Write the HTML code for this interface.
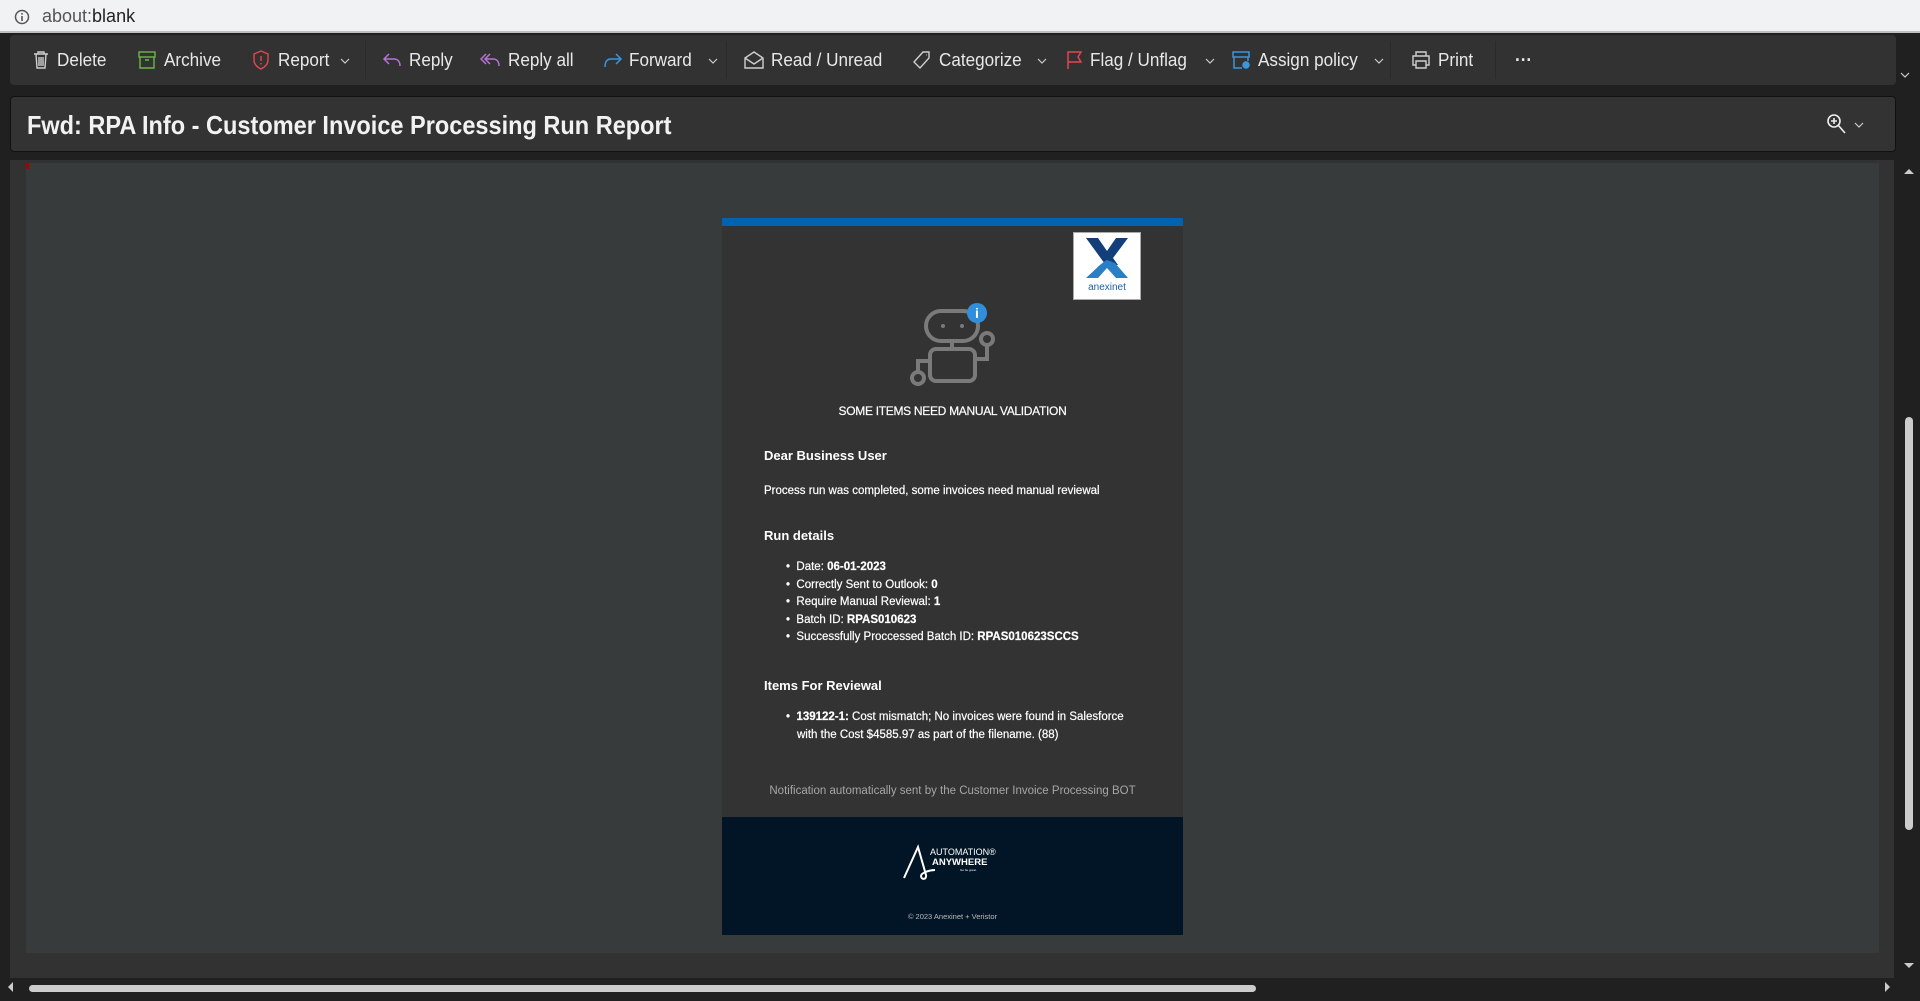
<!DOCTYPE html>
<html><head><meta charset="utf-8"><style>
*{margin:0;padding:0;box-sizing:border-box}
body{width:1920px;height:1001px;overflow:hidden;background:#202020;font-family:"Liberation Sans",sans-serif;position:relative}
.abs{position:absolute}
.addr{left:0;top:0;width:1920px;height:33px;background:#f1f2f4;border-bottom:2px solid #bfbfbf}
.tb{left:10px;top:35px;width:1886px;height:50px;background:#323232;border-radius:4px}
.ti{position:absolute;top:0;height:50px;line-height:50px;color:#e8e8e8;font-size:18px;white-space:nowrap;transform:scaleX(0.95);transform-origin:left}
.ic{position:absolute;top:15px}
.chev{position:absolute;top:22px}
.div{position:absolute;top:6px;width:1px;height:38px;background:#2a2a2a}
.subj{left:10px;top:96px;width:1886px;height:56px;background:#333;border:1px solid #111;border-radius:4px}
.panel{left:10px;top:160px;width:1884px;height:818px;background:#323232}
.content{left:26px;top:163px;width:1853px;height:790px;background:#383b3c}
.card{left:722px;top:218px;width:461px;height:717px;background:#333}
.t{position:absolute;color:#fff;white-space:nowrap}
</style></head><body>
<div class="abs addr">
 <svg class="abs" style="left:14px;top:9px" width="16" height="16"><circle cx="8" cy="8" r="6.5" fill="none" stroke="#555" stroke-width="1.5"/><rect x="7.2" y="7" width="1.6" height="5" fill="#555"/><rect x="7.2" y="4" width="1.6" height="1.6" fill="#555"/></svg>
 <div class="abs" style="left:42px;top:6px;font-size:18px;color:#555">about:<span style="color:#222">blank</span></div>
</div>
<div class="abs tb">
 <svg class="ic" style="left:21px" width="20" height="20" fill="none" stroke="#cfcfcf" stroke-width="1.4"><path d="M3 4h14M7 4V2h6v2M5 4l1 14h8l1-14M8 7v9M10 7v9M12 7v9"/></svg>
 <div class="ti" style="left:47px">Delete</div>
 <svg class="ic" style="left:127px" width="20" height="20" fill="none" stroke="#6cb548" stroke-width="1.4"><rect x="2" y="2" width="16" height="5"/><path d="M3 7v11h14V7M8 10h4"/></svg>
 <div class="ti" style="left:154px">Archive</div>
 <svg class="ic" style="left:241px" width="20" height="20" fill="none" stroke="#e0474e" stroke-width="1.4"><path d="M10 1l7 3v6c0 4-3 7-7 9-4-2-7-5-7-9V4z"/><path d="M10 6v5M10 13v1.5"/></svg>
 <div class="ti" style="left:268px">Report</div>
 <svg class="chev" style="left:330px" width="10" height="8" fill="none" stroke="#ccc" stroke-width="1.2"><path d="M1 2l4 4 4-4"/></svg>
 <div class="div" style="left:355px"></div>
 <svg class="ic" style="left:372px" width="22" height="20" fill="none" stroke="#b574d6" stroke-width="1.5"><path d="M7 4L2 9l5 5M2 9h10c4 0 6 3 6 7"/></svg>
 <div class="ti" style="left:399px">Reply</div>
 <svg class="ic" style="left:470px" width="22" height="20" fill="none" stroke="#b574d6" stroke-width="1.5"><path d="M6 4L1 9l5 5M10 4L5 9l5 5M5 9h8c4 0 6 3 6 7"/></svg>
 <div class="ti" style="left:498px">Reply all</div>
 <svg class="ic" style="left:591px" width="22" height="20" fill="none" stroke="#3a96dd" stroke-width="1.5"><path d="M15 4l5 5-5 5M20 9H10c-4 0-6 3-6 8"/></svg>
 <div class="ti" style="left:619px">Forward</div>
 <svg class="chev" style="left:698px" width="10" height="8" fill="none" stroke="#ccc" stroke-width="1.2"><path d="M1 2l4 4 4-4"/></svg>
 <div class="div" style="left:716px"></div>
 <svg class="ic" style="left:733px" width="22" height="20" fill="none" stroke="#cfcfcf" stroke-width="1.4"><path d="M2 8l9-6 9 6v10H2zM2 8l9 6 9-6"/></svg>
 <div class="ti" style="left:761px">Read / Unread</div>
 <svg class="ic" style="left:902px" width="20" height="20" fill="none" stroke="#cfcfcf" stroke-width="1.4"><path d="M11 2h6v6l-9 10-6-6zM14 5h.5"/></svg>
 <div class="ti" style="left:929px">Categorize</div>
 <svg class="chev" style="left:1027px" width="10" height="8" fill="none" stroke="#ccc" stroke-width="1.2"><path d="M1 2l4 4 4-4"/></svg>
 <svg class="ic" style="left:1055px" width="20" height="20" fill="none" stroke="#e0474e" stroke-width="1.5"><path d="M3 19V2h13l-3 5 3 5H3"/></svg>
 <div class="ti" style="left:1080px">Flag / Unflag</div>
 <svg class="chev" style="left:1195px" width="10" height="8" fill="none" stroke="#ccc" stroke-width="1.2"><path d="M1 2l4 4 4-4"/></svg>
 <svg class="ic" style="left:1221px" width="22" height="20" fill="none" stroke="#3a96dd" stroke-width="1.5"><path d="M2 2h16v5H2zM3 7v11h8M17 7v4"/><circle cx="15" cy="15" r="3" fill="#3a96dd"/></svg>
 <div class="ti" style="left:1248px">Assign policy</div>
 <svg class="chev" style="left:1364px" width="10" height="8" fill="none" stroke="#ccc" stroke-width="1.2"><path d="M1 2l4 4 4-4"/></svg>
 <div class="div" style="left:1380px"></div>
 <svg class="ic" style="left:1401px" width="20" height="20" fill="none" stroke="#cfcfcf" stroke-width="1.4"><path d="M5 6V2h10v4M5 15H2V6h16v9h-3M5 11h10v7H5z"/></svg>
 <div class="ti" style="left:1428px">Print</div>
 <div class="div" style="left:1485px"></div>
 <div class="ti" style="left:1505px;font-weight:bold;top:0px">···</div>
</div>
<svg class="abs" style="left:1900px;top:71px" width="10" height="8" fill="none" stroke="#ccc" stroke-width="1.2"><path d="M1 2l4 4 4-4"/></svg>
<div class="abs subj">
 <div class="t" style="left:16px;top:13px;font-size:26px;font-weight:bold;color:#f2f2f2;transform:scaleX(0.905);transform-origin:left">Fwd: RPA Info - Customer Invoice Processing Run Report</div>
 <svg class="abs" style="left:1815px;top:16px" width="22" height="24" fill="none" stroke="#eee" stroke-width="1.6"><circle cx="8" cy="8" r="6"/><path d="M12 12l7 8M8 5v6M5 8h6"/></svg>
 <svg class="abs" style="left:1843px;top:24px" width="10" height="8" fill="none" stroke="#ccc" stroke-width="1.2"><path d="M1 2l4 4 4-4"/></svg>
</div>
<div class="abs panel"></div>
<div class="abs content"></div>
<div class="abs" style="left:26px;top:163px;width:3px;height:6px;background:#a00"></div>
<div class="abs card">
 <div class="abs" style="left:0;top:0;width:461px;height:8px;background:#0063b1"></div>
 <div class="abs" style="left:351px;top:14px;width:68px;height:68px;background:#fff;border:1px solid #aaa">
  <svg width="66" height="66"><path d="M12 5h12l9 13 9-13h12L39 25l5 7H32l-1-1z" fill="#123f7a"/><path d="M33 27c-6 3-12 10-21 18h12l9-10 9 10h12L41 30z" fill="#2a7ec6"/><text x="33" y="57" font-size="10" text-anchor="middle" fill="#1a5fa8" font-family="Liberation Sans">anexinet</text></svg>
 </div>
 <svg class="abs" style="left:188px;top:83px" width="90" height="85" fill="none" stroke="#7a7a7a" stroke-width="4"><rect x="16" y="10" width="52" height="30" rx="15"/><circle cx="33" cy="25" r="2" fill="#7a7a7a" stroke="none"/><circle cx="52" cy="25" r="2" fill="#7a7a7a" stroke="none"/><path d="M42 40v8"/><rect x="20" y="48" width="45" height="32" rx="6"/><path d="M65 58h12V44"/><circle cx="77" cy="38" r="6"/><path d="M20 60H8v12"/><circle cx="8" cy="77" r="6"/><circle cx="67" cy="12" r="10" fill="#2f8fdc" stroke="none"/><text x="67" y="17" font-size="14" font-weight="bold" fill="#fff" stroke="none" text-anchor="middle" font-family="Liberation Sans">i</text></svg>
 <div class="t" style="left:0;width:461px;text-align:center;top:186px;font-size:12px;letter-spacing:-0.3px;-webkit-text-stroke:0.2px #fff">SOME ITEMS NEED MANUAL VALIDATION</div>
 <div class="t" style="left:42px;top:230px;font-size:13px;font-weight:bold">Dear Business User</div>
 <div class="t" style="left:42px;top:267px;font-size:11.5px;-webkit-text-stroke:0.2px #fff">Process run was completed, some invoices need manual reviewal</div>
 <div class="t" style="left:42px;top:310px;font-size:13px;font-weight:bold">Run details</div>
 <div class="t" style="left:64px;top:341px;font-size:11.5px;line-height:17.5px;-webkit-text-stroke:0.2px #fff">
  <div>•&nbsp;&nbsp;Date: <b>06-01-2023</b></div>
  <div>•&nbsp;&nbsp;Correctly Sent to Outlook: <b>0</b></div>
  <div>•&nbsp;&nbsp;Require Manual Reviewal: <b>1</b></div>
  <div>•&nbsp;&nbsp;Batch ID: <b>RPAS010623</b></div>
  <div>•&nbsp;&nbsp;Successfully Proccessed Batch ID: <b>RPAS010623SCCS</b></div>
 </div>
 <div class="t" style="left:42px;top:460px;font-size:13px;font-weight:bold">Items For Reviewal</div>
 <div class="t" style="left:64px;top:491px;font-size:11.5px;line-height:17.5px;-webkit-text-stroke:0.2px #fff">
  <div>•&nbsp;&nbsp;<b>139122-1:</b> Cost mismatch; No invoices were found in Salesforce</div>
  <div style="padding-left:11px">with the Cost $4585.97 as part of the filename. (88)</div>
 </div>
 <div class="t" style="left:0;width:461px;text-align:center;top:567px;font-size:11.5px;color:#a6a6a6">Notification automatically sent by the Customer Invoice Processing BOT</div>
 <div class="abs" style="left:0;top:599px;width:461px;height:118px;background:#021526">
  <svg class="abs" style="left:180px;top:26px" width="105" height="40"><path d="M2 35L16 4l8 28c1 5-5 5-5 1 0-3 8-6 14-6" fill="none" stroke="#fff" stroke-width="2"/><text x="28" y="12" font-size="9" fill="#fff" font-family="Liberation Sans">AUTOMATION®</text><text x="30" y="22" font-size="9.5" font-weight="bold" fill="#fff" font-family="Liberation Sans">ANYWHERE</text><text x="58" y="28" font-size="3" fill="#fff" font-family="Liberation Sans">Go be great.</text></svg>
  <div class="t" style="left:0;width:461px;text-align:center;top:95px;font-size:7.5px;color:#bbb">© 2023 Anexinet + Veristor</div>
 </div>
</div>
<div class="abs" style="left:0;top:978px;width:1920px;height:23px;background:#202020"></div>
<div class="abs" style="left:29px;top:985px;width:1227px;height:7px;background:#ccc;border-radius:4px"></div>
<div class="abs" style="left:8px;top:982px;width:0;height:0;border:5px solid transparent;border-right-color:#ccc;border-left:0"></div>
<div class="abs" style="left:1885px;top:982px;width:0;height:0;border:5px solid transparent;border-left-color:#ccc;border-right:0"></div>
<div class="abs" style="left:1905px;top:417px;width:8px;height:413px;background:#ccc;border-radius:4px"></div>
<div class="abs" style="left:1904px;top:169px;width:0;height:0;border:5px solid transparent;border-bottom-color:#ccc;border-top:0"></div>
<div class="abs" style="left:1904px;top:963px;width:0;height:0;border:5px solid transparent;border-top-color:#ccc;border-bottom:0"></div>
</body></html>
